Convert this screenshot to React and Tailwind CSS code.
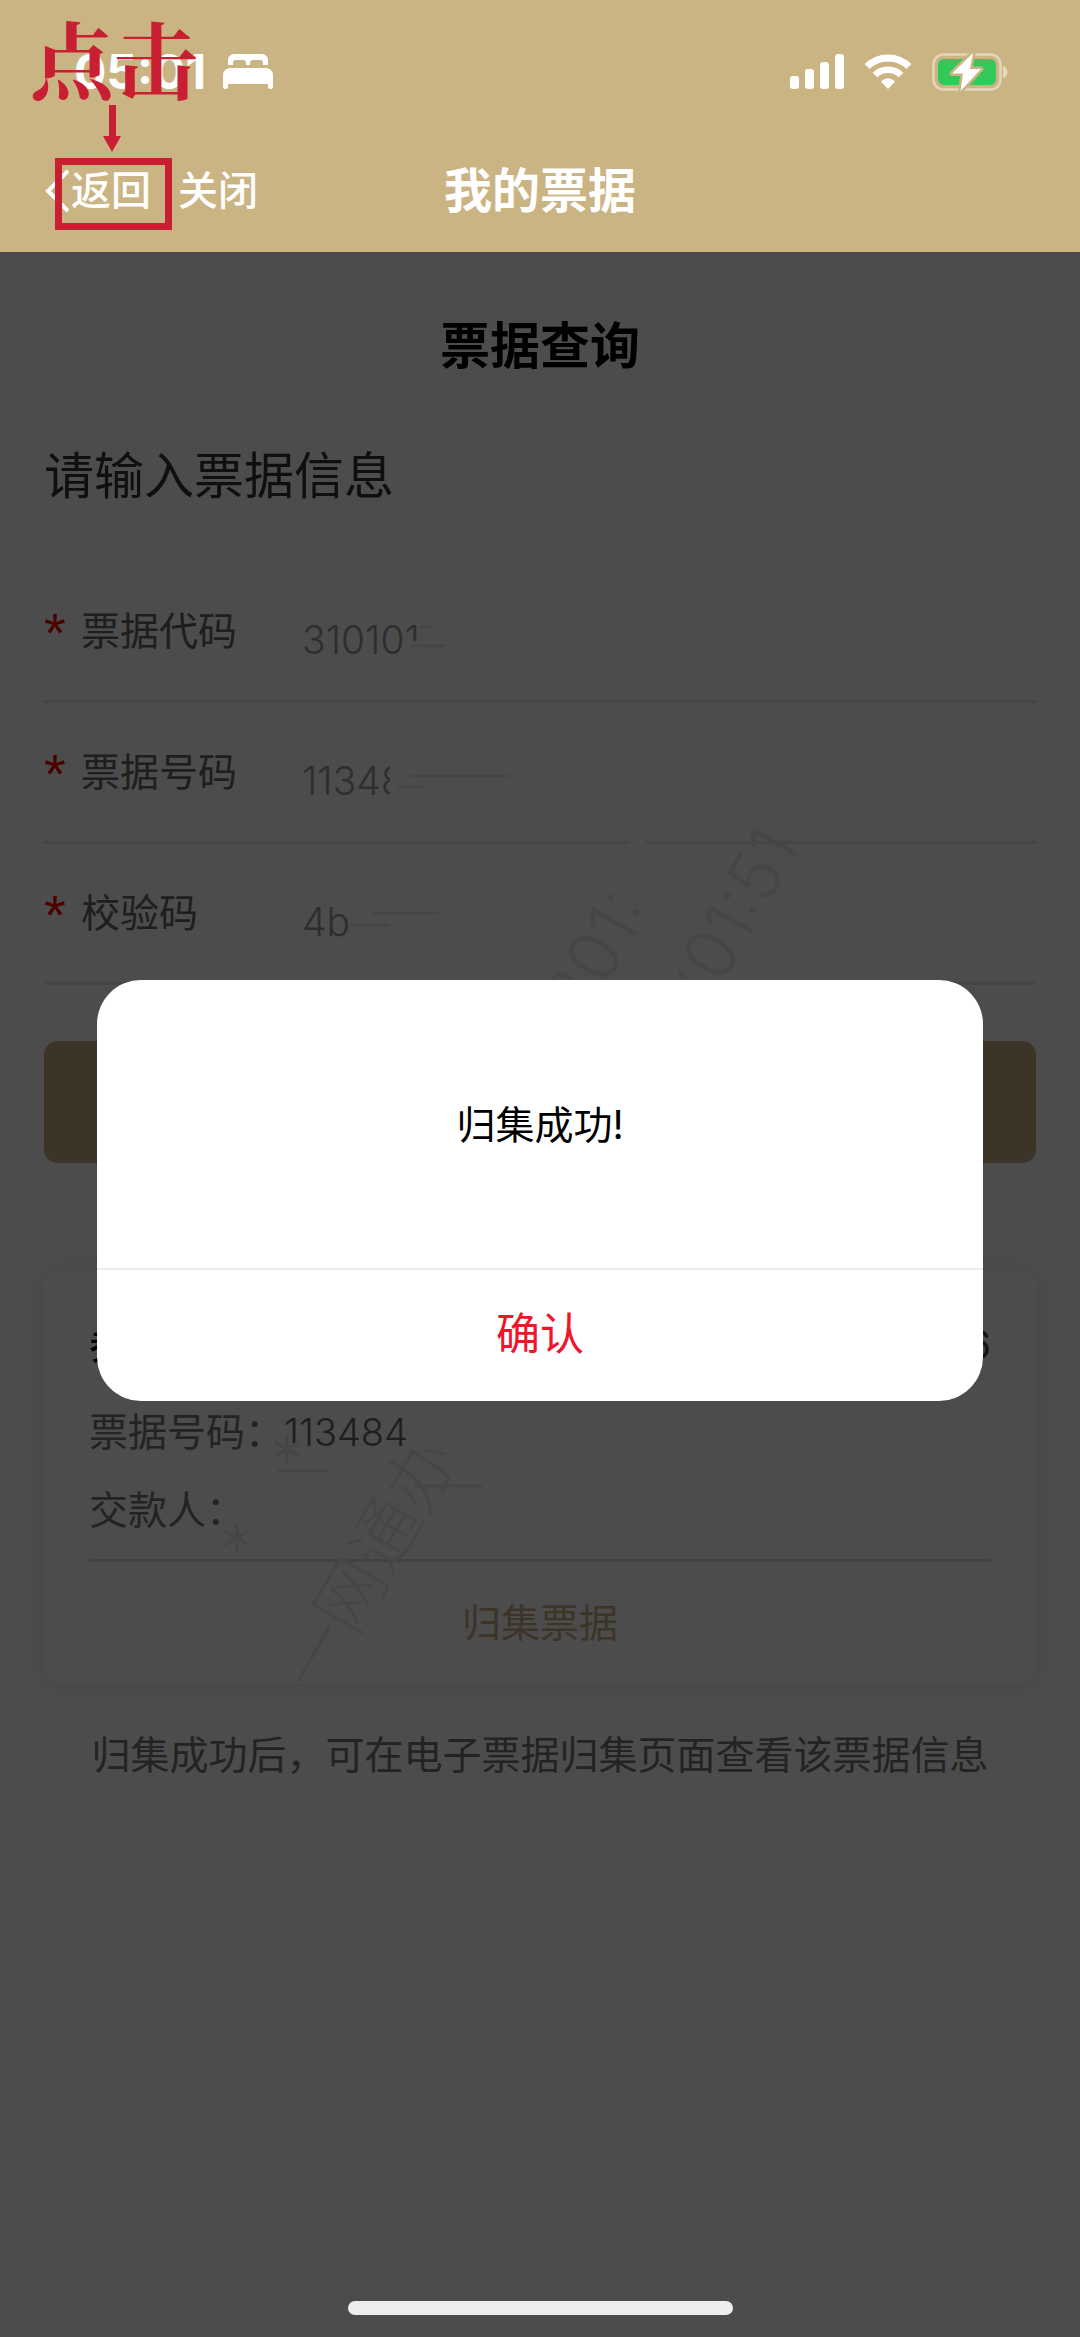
import React, { useState } from 'react';

const fields = [
  { id: 'code', label: '票据代码', value: '310101' },
  { id: 'number', label: '票据号码', value: '113484' },
  { id: 'check', label: '校验码', value: '4b' },
];

const BedIcon = () => (
  <svg width="50" height="36" viewBox="0 0 50 36" fill="#fff" aria-hidden="true">
    <path d="M5 11V6a6 6 0 0 1 6-6h28a6 6 0 0 1 6 6v5h-5V9q0-3-3-3h-7q-3 0-3 3v2h-4V9q0-3-3-3h-7q-3 0-3 3v2z" />
    <path d="M0 22q0-8 8-8h34q8 0 8 8v11q0 2-2 2h-1q-2 0-2-2v-3H5v3q0 2-2 2H2q-2 0-2-2z" />
  </svg>
);

const SignalIcon = () => (
  <svg width="54" height="36" viewBox="0 0 54 36" fill="#fff" aria-hidden="true">
    <rect x="0" y="22" width="9" height="13" rx="3" />
    <rect x="15" y="15" width="9" height="20" rx="3" />
    <rect x="30" y="8" width="9" height="27" rx="3" />
    <rect x="45" y="0" width="9" height="35" rx="3" />
  </svg>
);

const WifiIcon = () => (
  <svg width="48" height="36" viewBox="0 0 48 36" fill="none" aria-hidden="true">
    <path d="M3 12.5a30 30 0 0 1 42 0" stroke="#fff" strokeWidth="7" />
    <path d="M11 21a18.500 18.500 0 0 1 26 0" stroke="#fff" strokeWidth="6.500" />
    <path d="M24 35l-7-7.500q7-6.500 14 0z" fill="#fff" />
  </svg>
);

const BatteryIcon = () => (
  <svg width="76" height="40" viewBox="0 0 76 40" aria-hidden="true">
    <rect x="1.500" y="2.500" width="67" height="35" rx="10" fill="none" stroke="#fff" strokeOpacity="0.45" strokeWidth="2.500" />
    <path d="M71 14q4.500 2 4.500 6t-4.500 6z" fill="#fff" fillOpacity="0.5" />
    <rect x="6" y="7" width="58" height="26" rx="6" fill="#34c759" />
    <path d="M41 1L20 21.500h11L28.500 39 49 17H38z" fill="#fff" stroke="#cbb483" strokeWidth="5" strokeLinejoin="round" paintOrder="stroke" />
  </svg>
);

const Header = () => (
  <header className="relative bg-[#cbb483] text-white">
    <div className="flex h-32 items-center justify-between pt-4 pl-[74px] pr-[72px]">
      <div className="flex items-center gap-[17px]">
        <span className="text-[48px] leading-[48px] font-bold">05:01</span>
        <BedIcon />
      </div>
      <div className="flex items-center gap-5">
        <SignalIcon />
        <WifiIcon />
        <BatteryIcon />
      </div>
    </div>

    <nav className="grid h-[124px] grid-cols-[1fr_auto_1fr] items-center px-[45px] pt-[2px]">
      <div className="flex items-center gap-[27px] text-[40px] leading-[48px] font-medium">
        <button type="button" className="flex items-center gap-[2px]">
          <svg width="24" height="44" viewBox="0 0 24 44" fill="none" aria-hidden="true">
            <path d="M23 2L3 22l20 20" stroke="#fff" strokeWidth="4" />
          </svg>
          返回
        </button>
        <button type="button">关闭</button>
      </div>
      <h1 className="text-[48px] leading-[60px] font-semibold">我的票据</h1>
    </nav>

    {/* tutorial mark over the back button */}
    <div className="pointer-events-none absolute top-[9px] left-[30px] z-20 text-[#c91f32]">
      <p className="font-['Noto_Serif_CJK_SC','Noto_Sans_CJK_SC',serif] text-[84px] leading-[96px] font-bold">点击</p>
      <svg width="144" height="126" viewBox="0 0 144 126" fill="currentColor" aria-hidden="true">
        <path d="M79 0h7v31h5l-9 16-9-16h6z" />
        <rect x="28.500" y="56.500" width="110" height="65" fill="none" stroke="currentColor" strokeWidth="7" />
      </svg>
    </div>
  </header>
);

const Field = ({ id, label, value }) => (
  <div className="flex h-[141px] items-center border-b-[3px] border-[#e6e6e6]">
    <label htmlFor={id} className="flex w-[258px] items-center text-[39px] leading-[60px] text-[#666]">
      <span className="w-[37px] pt-1 font-['Liberation_Sans',sans-serif] text-[56px] text-[#f00]">*</span>
      {label}
    </label>
    <input
      id={id}
      type="text"
      defaultValue={value}
      className="mt-4 h-[60px] min-w-0 flex-1 bg-transparent text-[39px] font-light text-[#999] outline-none"
    />
  </div>
);

// White strokes wiped over the private digits, with the faint edges they leave
const Smudges = () => (
  <svg className="pointer-events-none absolute top-0 left-0" width="660" height="1300" viewBox="0 252 660 1300" aria-hidden="true">
    <g fill="#fff">
      <rect x="404" y="641" width="60" height="20" />
      <rect x="390" y="760" width="80" height="40" />
      <rect x="630" y="840" width="15" height="8" />
    </g>
    <g stroke="#e8e8e8" strokeWidth="3">
      <path d="M411 646h35M420 627h13M410 776h99M398 787h27M373 913h66M350 925h39" />
      <path d="M278 1471h51M415 1486h67" />
    </g>
  </svg>
);

const Watermark = () => (
  <div className="pointer-events-none absolute inset-0 overflow-hidden text-[70px] leading-[72px] font-light whitespace-nowrap text-[#ebebeb]" aria-hidden="true">
    <span className="absolute top-[724px] left-[562px] origin-left rotate-[-60deg]">301:</span>
    <span className="absolute top-[702px] left-[690px] origin-left rotate-[-60deg]">:01:51</span>
    <span className="absolute top-[1398px] left-[298px] origin-left rotate-[-60deg]">一网通办</span>
    <span className="absolute top-[1271px] left-[238px] origin-left rotate-[-60deg]">*</span>
    <span className="absolute top-[1182px] left-[288px] origin-left rotate-[-60deg]">*</span>
  </div>
);

const Dialog = ({ onConfirm }) => (
  <div className="absolute inset-0 z-10 flex flex-col items-center bg-black/70 px-[97px] pt-[728px]">
    <div role="dialog" aria-modal="true" className="w-full overflow-hidden rounded-[44px] bg-white text-center">
      <p className="pt-[115px] pb-[113px] text-[39px] leading-[60px] text-black">归集成功!</p>
      <button
        type="button"
        onClick={onConfirm}
        className="block h-[133px] w-full border-t-2 border-[#ebebf0] pb-1 text-[44px] leading-[60px] text-[#f0142d]"
      >
        确认
      </button>
    </div>
    <div className="mt-auto mb-[22px] h-[14px] w-[385px] rounded-full bg-[#eee]" />
  </div>
);

export default function App() {
  const [open, setOpen] = useState(true);

  return (
    <div className="flex min-h-screen flex-col bg-white font-['Inter','Noto_Sans_CJK_SC',sans-serif]">
      <Header />

      <main className="relative flex-1 px-[44px] pt-[64px] pb-[100px]">
        <Watermark />

        <h2 className="text-center text-[50px] leading-[60px] font-semibold text-black">票据查询</h2>
        <h3 className="mt-[70px] text-[50px] leading-[60px] text-[#333]">请输入票据信息</h3>

        <form className="mt-[56px]" onSubmit={(e) => e.preventDefault()}>
          {fields.map((f) => (
            <Field key={f.id} {...f} />
          ))}
          <button type="submit" aria-label="查询" className="mt-14 block h-[122px] w-full rounded-[14px] bg-[#cbae86]" />
        </form>

        <section className="mt-[110px] rounded-[14px] px-[45px] pt-[42px] text-[39px] text-[#777] shadow-[0_0_36px_rgba(0,0,0,0.08)]">
          <div className="flex justify-between leading-[60px]">
            <strong className="font-medium text-black">券</strong>
            <span className="text-[#444]">6</span>
          </div>
          <div className="mt-[18px] mb-[10px] leading-[78px]">
            <p>票据号码：<span className="text-[38px] font-light text-[#666]">113484</span></p>
            <p>交款人：</p>
          </div>
          <button type="button" className="block h-[125px] w-full border-t-[3px] border-[#ddd] text-[#cbae86]">
            归集票据
          </button>
        </section>

        <p className="mt-[41px] text-center text-[39px] leading-[60px] text-[#777]">
          归集成功后，可在电子票据归集页面查看该票据信息
        </p>

        <Smudges />
        {open && <Dialog onConfirm={() => setOpen(false)} />}
      </main>
    </div>
  );
}
